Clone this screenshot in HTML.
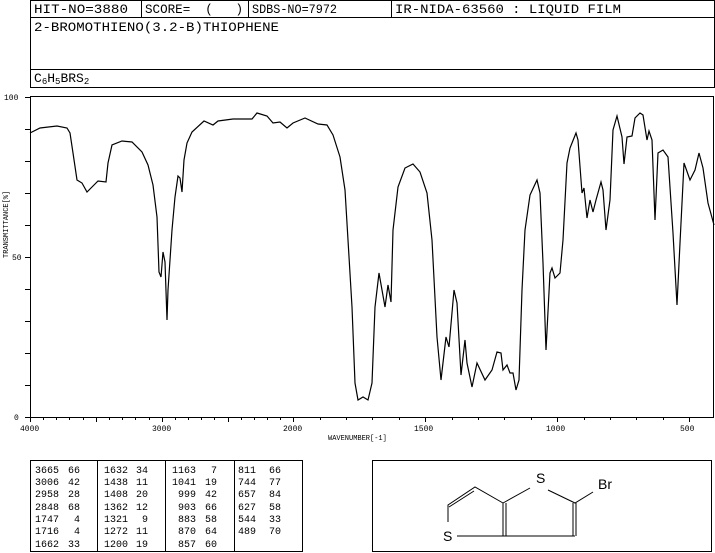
<!DOCTYPE html>
<html><head><meta charset="utf-8"><style>
html,body{margin:0;padding:0;background:#fff;}
svg{display:block;}
text{font-family:"Liberation Mono",monospace;fill:#000;white-space:pre;}
.t text{text-anchor:end;}
</style></head><body>
<svg width="715" height="553" viewBox="0 0 715 553" xmlns="http://www.w3.org/2000/svg" xml:space="preserve">
<g fill="none" stroke="#000" stroke-width="1" shape-rendering="crispEdges">
<rect x="30.5" y="0.5" width="684" height="87"/>
<line x1="30" y1="17.5" x2="715" y2="17.5"/>
<line x1="30" y1="69.5" x2="715" y2="69.5"/>
<line x1="141.5" y1="0" x2="141.5" y2="17"/>
<line x1="248.5" y1="0" x2="248.5" y2="17"/>
<line x1="391.5" y1="0" x2="391.5" y2="17"/>
<rect x="30.5" y="96.5" width="683" height="321"/>
<rect x="30.5" y="460.5" width="272" height="91"/>
<line x1="97.5" y1="460" x2="97.5" y2="552"/>
<line x1="165.5" y1="460" x2="165.5" y2="552"/>
<line x1="234.5" y1="460" x2="234.5" y2="552"/>
<rect x="372.5" y="460.5" width="339" height="91"/>
</g>
<g font-size="13">
<text x="34" y="13" textLength="94" lengthAdjust="spacingAndGlyphs">HIT-NO=3880</text>
<text x="145" y="13" textLength="98" lengthAdjust="spacingAndGlyphs">SCORE=  (   )</text>
<text x="252" y="13" textLength="85" lengthAdjust="spacingAndGlyphs">SDBS-NO=7972</text>
<text x="395" y="13" textLength="226" lengthAdjust="spacingAndGlyphs">IR-NIDA-63560 : LIQUID FILM</text>
<text x="34" y="31" textLength="245" lengthAdjust="spacingAndGlyphs">2-BROMOTHIENO(3.2-B)THIOPHENE</text>
<text x="34" y="82">C<tspan font-size="9" dy="2">6</tspan><tspan dy="-2">H</tspan><tspan font-size="9" dy="2">5</tspan><tspan dy="-2">BRS</tspan><tspan font-size="9" dy="2">2</tspan></text>
</g>
<g font-size="8">
<text x="4" y="100">100</text>
<text x="12" y="260">50</text>
<text x="14" y="420">0</text>
<text transform="translate(8,258) rotate(-90)" font-size="7">TRANSMITTANCE[%]</text>
<text x="20" y="431">4000</text>
<text x="152" y="431">3000</text>
<text x="283" y="431">2000</text>
<text x="414" y="431">1500</text>
<text x="546" y="431">1000</text>
<text x="680" y="431">500</text>
<text x="328" y="440" font-size="7">WAVENUMBER[-1]</text>
</g>
<g stroke="#000" stroke-width="1" shape-rendering="crispEdges">
<path d="M25 97.5H30M25 129.5H30M25 161.5H30M25 193.5H30M25 225.5H30M25 257.5H30M25 289.5H30M25 321.5H30M25 353.5H30M25 385.5H30M25 417.5H30"/>
<path d="M30.5 417v5M43.5 417v3M56.5 417v3M69.5 417v3M83.5 417v3M96.5 417v5M109.5 417v3M122.5 417v3M135.5 417v3M149.5 417v3M162.5 417v5M175.5 417v3M188.5 417v3M201.5 417v3M214.5 417v3M228.5 417v5M241.5 417v3M254.5 417v3M267.5 417v3M280.5 417v3M293.5 417v5M320.5 417v3M346.5 417v3M372.5 417v3M399.5 417v3M425.5 417v5M452.5 417v3M478.5 417v3M504.5 417v3M531.5 417v3M557.5 417v5M584.5 417v3M610.5 417v3M636.5 417v3M663.5 417v3M689.5 417v5"/>
</g>
<polyline fill="none" stroke="#000" stroke-width="1.2" points="30,133 40,128 57,126 67,128 70,133 73,153 77,180 82,183 87,192 92,187 98,181 106,182 108,163 112,145 122,141 132,142 142,152 148,165 153,185 157,217 159,272 161,277 163,252 165,262 167,320 168,290 172,230 175,197 178,176 180,178 182,192 184,160 187,143 192,132 204,121 213,125 218,121 233,119 252,119 257,113 267,116 273,123 280,122 287,128 293,123 305,118 318,124 327,125 333,135 340,157 345,190 348,240 352,307 355,383 358,400 363,397 368,400 372,383 375,307 379,273 382,290 385,307 388,285 391,302 393,230 398,187 405,168 413,164 420,172 427,193 432,240 437,337 441,380 446,337 449,347 454,290 457,303 461,375 465,340 467,363 472,387 477,363 485,380 492,370 497,352 501,353 503,370 507,365 510,373 513,373 516,390 519,380 522,290 525,230 530,195 537,180 540,193 543,263 546,350 550,273 552,268 555,278 560,273 563,240 567,163 570,148 576,133 578,140 582,193 584,188 587,218 590,200 593,212 596,200 601,182 603,190 606,230 610,200 613,130 617,116 622,137 624,164 627,137 632,136 635,118 640,113 643,115 647,140 649,131 652,140 655,220 658,153 663,150 668,157 673,233 677,305 680,243 684,163 690,180 695,170 699,153 703,168 708,203 714,225"/>
<g class="t" font-size="10">
<text x="59" y="473">3665</text><text x="80" y="473">66</text>
<text x="59" y="485">3006</text><text x="80" y="485">42</text>
<text x="59" y="497">2958</text><text x="80" y="497">28</text>
<text x="59" y="510">2848</text><text x="80" y="510">68</text>
<text x="59" y="522">1747</text><text x="80" y="522">4</text>
<text x="59" y="534">1716</text><text x="80" y="534">4</text>
<text x="59" y="547">1662</text><text x="80" y="547">33</text>
<text x="128" y="473">1632</text><text x="148" y="473">34</text>
<text x="128" y="485">1438</text><text x="148" y="485">11</text>
<text x="128" y="497">1408</text><text x="148" y="497">20</text>
<text x="128" y="510">1362</text><text x="148" y="510">12</text>
<text x="128" y="522">1321</text><text x="148" y="522">9</text>
<text x="128" y="534">1272</text><text x="148" y="534">11</text>
<text x="128" y="547">1200</text><text x="148" y="547">19</text>
<text x="196" y="473">1163</text><text x="217" y="473">7</text>
<text x="196" y="485">1041</text><text x="217" y="485">19</text>
<text x="196" y="497">999</text><text x="217" y="497">42</text>
<text x="196" y="510">903</text><text x="217" y="510">66</text>
<text x="196" y="522">883</text><text x="217" y="522">58</text>
<text x="196" y="534">870</text><text x="217" y="534">64</text>
<text x="196" y="547">857</text><text x="217" y="547">60</text>
<text x="256" y="473">811</text><text x="281" y="473">66</text>
<text x="256" y="485">744</text><text x="281" y="485">77</text>
<text x="256" y="497">657</text><text x="281" y="497">84</text>
<text x="256" y="510">627</text><text x="281" y="510">58</text>
<text x="256" y="522">544</text><text x="281" y="522">33</text>
<text x="256" y="534">489</text><text x="281" y="534">70</text>
</g>
<g fill="none" stroke="#000" stroke-width="1">
<path d="M503 503V536M506 503V536M573 503V536M576 503V536M457 536H503M503 536H575M503 503L530 488M548 490L575 503L593 492M503 503L475 487L448 505V522M474 491L449 507"/>
</g>
<g font-size="14">
<text x="536" y="483" style="font-family:'Liberation Sans',sans-serif">S</text>
<text x="598" y="489" style="font-family:'Liberation Sans',sans-serif">Br</text>
<text x="443" y="541" style="font-family:'Liberation Sans',sans-serif">S</text>
</g>
</svg>
</body></html>
